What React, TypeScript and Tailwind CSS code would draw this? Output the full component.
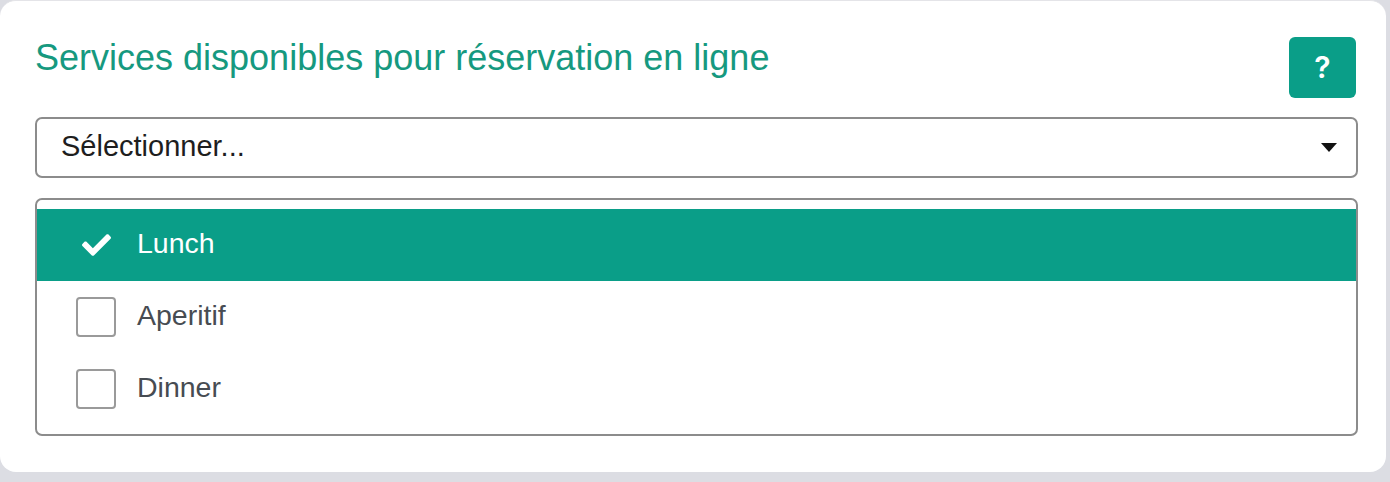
import { useState } from "react";

const SERVICES = ["Lunch", "Aperitif", "Dinner"];

function Check() {
  return (
    <svg viewBox="0 65 512 382" className="w-[29px] h-[22px]" fill="currentColor">
      <path d="M173.898 439.404l-166.4-166.4c-9.997-9.997-9.997-26.206 0-36.204l36.203-36.204c9.997-9.998 26.207-9.998 36.204 0L192 312.69 432.095 72.596c9.997-9.997 26.207-9.997 36.204 0l36.203 36.204c9.997 9.997 9.997 26.206 0 36.204l-294.4 294.401c-9.998 9.997-26.207 9.997-36.204-.001z" />
    </svg>
  );
}

export default function App() {
  const [selected, setSelected] = useState<string[]>(["Lunch"]);

  const toggle = (s: string) =>
    setSelected((cur) => (cur.includes(s) ? cur.filter((x) => x !== s) : [...cur, s]));

  return (
    <div
      className="w-[1390px] h-[482px] bg-[#dcdde3] pr-[4px] pb-[10px]"
      style={{ fontFamily: '"Liberation Sans", Arial, sans-serif' }}
    >
      <div className="h-full bg-white rounded-[16px] pt-[36px] pl-[35px] pr-[28px] pb-[35px] border-t border-[#e4e4e8]">
        <div className="flex items-start justify-between">
          <h2 className="text-[36px] leading-[46px] text-[#16997f] -mt-[2px]">
            Services disponibles pour réservation en ligne
          </h2>
          <button className="w-[67px] h-[61px] rounded-[6px] bg-[#0a9e88] text-white text-[30px] font-semibold font-[Inter] flex items-center justify-center mr-[2px]">
            ?
          </button>
        </div>

        <div className="mt-[19px] h-[61px] border-2 border-[#8c8c8c] rounded-[7px] flex items-center justify-between pl-[24px] pr-[19px]">
          <span className="text-[29px] text-[#1e1e1e] -mt-[2px]">Sélectionner...</span>
          <span className="w-0 h-0 border-l-[8px] border-r-[8px] border-t-[9px] border-l-transparent border-r-transparent border-t-[#111]" />
        </div>

        <div className="mt-[20px] border-2 border-[#8c8c8c] rounded-[7px] pt-[9px] pb-[9px]">
          {SERVICES.map((s) => {
            const on = selected.includes(s);
            return (
              <div
                key={s}
                onClick={() => toggle(s)}
                className={
                  on
                    ? "h-[72px] flex items-center bg-[#0a9e88] text-white cursor-pointer"
                    : "h-[72px] flex items-center text-[#474c52] cursor-pointer"
                }
              >
                <div className="w-[100px] flex items-center justify-center pl-[18px]">
                  {on ? (
                    <Check />
                  ) : (
                    <span className="w-[40px] h-[40px] border-2 border-[#9a9a9a] rounded-[4px] block" />
                  )}
                </div>
                <span className="text-[28.5px] -mt-[3px]">{s}</span>
              </div>
            );
          })}
        </div>
      </div>
    </div>
  );
}
